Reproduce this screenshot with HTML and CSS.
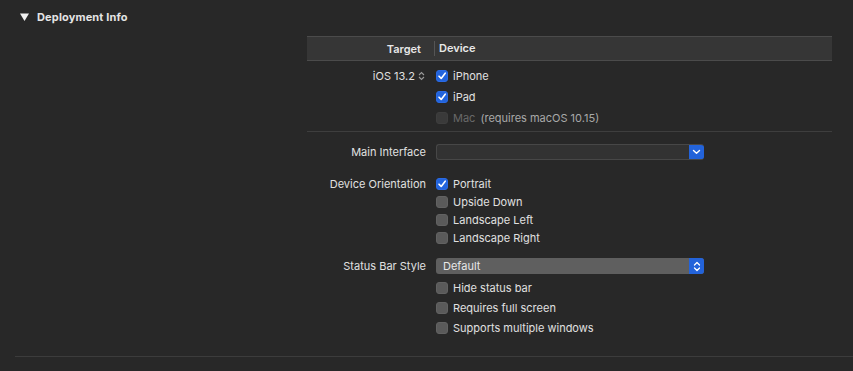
FILE: index.html
```html
<!DOCTYPE html>
<html>
<head>
<meta charset="utf-8">
<link rel="stylesheet" href="styles.css">
</head>
<body>
<div class="page">
  <div class="section-title">
    <svg class="disclosure" width="9" height="8" viewBox="0 0 9 8"><path d="M0 0.5 H9 L4.5 8 Z" fill="#f0f0f0"/></svg>
    <span>Deployment Info</span>
  </div>

  <div class="table">
    <div class="thead">
      <div class="th th-target">Target</div>
      <div class="th th-device">Device</div>
    </div>

    <div class="group group-targets">
      <div class="label">iOS 13.2
        <svg class="stepper" width="7" height="10" viewBox="0 0 7 10"><path d="M1 4 L3.5 1.5 L6 4 M1 6 L3.5 8.5 L6 6" fill="none" stroke="#9a9a9a" stroke-width="1.1"/></svg>
      </div>
      <div class="control"><span class="cb checked"><svg viewBox="0 0 12 12"><path d="M3 6.2 L5.2 8.4 L9.2 3.2" fill="none" stroke="#fff" stroke-width="1.6" stroke-linecap="round" stroke-linejoin="round"/></svg></span><span class="text">iPhone</span></div>
      <div class="label"></div>
      <div class="control"><span class="cb checked"><svg viewBox="0 0 12 12"><path d="M3 6.2 L5.2 8.4 L9.2 3.2" fill="none" stroke="#fff" stroke-width="1.6" stroke-linecap="round" stroke-linejoin="round"/></svg></span><span class="text">iPad</span></div>
      <div class="label"></div>
      <div class="control"><span class="cb disabled"></span><span class="text dim">Mac</span><span class="text note">(requires macOS 10.15)</span></div>
    </div>

    <div class="rule"></div>

    <div class="group group-main">
      <div class="label">Main Interface</div>
      <div class="control">
        <div class="select empty">
          <span class="select-value"></span>
          <span class="select-btn"><svg width="9" height="6" viewBox="0 0 9 6"><path d="M1.5 1.5 L4.5 4.3 L7.5 1.5" fill="none" stroke="#fff" stroke-width="1.4" stroke-linecap="round" stroke-linejoin="round"/></svg></span>
        </div>
      </div>
    </div>

    <div class="group group-orient">
      <div class="label">Device Orientation</div>
      <div class="control"><span class="cb checked"><svg viewBox="0 0 12 12"><path d="M3 6.2 L5.2 8.4 L9.2 3.2" fill="none" stroke="#fff" stroke-width="1.6" stroke-linecap="round" stroke-linejoin="round"/></svg></span><span class="text">Portrait</span></div>
      <div class="label"></div>
      <div class="control"><span class="cb"></span><span class="text">Upside Down</span></div>
      <div class="label"></div>
      <div class="control"><span class="cb"></span><span class="text">Landscape Left</span></div>
      <div class="label"></div>
      <div class="control"><span class="cb"></span><span class="text">Landscape Right</span></div>
    </div>

    <div class="group group-status">
      <div class="label">Status Bar Style</div>
      <div class="control">
        <div class="select filled">
          <span class="select-value">Default</span>
          <span class="select-btn"><svg width="8" height="11" viewBox="0 0 8 11"><path d="M1.5 4 L4 1.5 L6.5 4 M1.5 7 L4 9.5 L6.5 7" fill="none" stroke="#fff" stroke-width="1.3" stroke-linecap="round" stroke-linejoin="round"/></svg></span>
        </div>
      </div>
    </div>

    <div class="group group-statusopts">
      <div class="label"></div>
      <div class="control"><span class="cb"></span><span class="text">Hide status bar</span></div>
      <div class="label"></div>
      <div class="control"><span class="cb"></span><span class="text">Requires full screen</span></div>
      <div class="label"></div>
      <div class="control"><span class="cb"></span><span class="text">Supports multiple windows</span></div>
    </div>
  </div>

  <div class="bottom-rule"></div>
</div>
</body>
</html>
```

FILE: styles.css
```css
html, body {
  margin: 0;
  padding: 0;
  background: #282828;
}

body {
  width: 853px;
  height: 371px;
  overflow: hidden;
  font-family: "Inter", "Liberation Sans", sans-serif;
  font-size: 11px;
  color: #e0e0e0;
}

.page {
  display: flex;
  flex-direction: column;
}

.section-title {
  display: flex;
  align-items: center;
  height: 34px;
  padding-left: 20px;
  box-sizing: border-box;
  font-weight: 700;
  font-size: 11px;
  letter-spacing: 0.15px;
  color: #e4e4e4;
}

.section-title .disclosure {
  margin-right: 8px;
}

.table {
  margin-left: 307px;
  width: 525px;
  margin-top: 2px;
}

.thead {
  display: grid;
  grid-template-columns: 127px 1fr;
  height: 25px;
  box-sizing: border-box;
  background: #363636;
  border-top: 1px solid #4b4b4b;
  border-bottom: 1px solid #4b4b4b;
  align-items: center;
  font-weight: 600;
  color: #e8e8e8;
}

.th-target {
  text-align: right;
  padding-right: 13px;
}

.th-device {
  border-left: 1px solid #555;
  height: 15px;
  line-height: 15px;
  padding-left: 4px;
}

.group {
  display: grid;
  grid-template-columns: 129px 1fr;
  align-items: center;
}

.label {
  text-align: right;
  padding-right: 10px;
  white-space: nowrap;
  display: flex;
  justify-content: flex-end;
  align-items: center;
}

.control {
  display: flex;
  align-items: center;
}

.group-targets {
  grid-auto-rows: 21px;
  padding-top: 4px;
  padding-bottom: 3px;
}

.group-targets .label {
  padding-right: 11px;
}

.stepper {
  margin-left: 3px;
}

.rule {
  height: 1px;
  background: #3e3e3e;
}

.group-main {
  grid-auto-rows: 20px;
  margin-top: 10px;
}

.group-orient {
  grid-auto-rows: 18px;
  margin-top: 13px;
}

.group-status {
  grid-auto-rows: 20px;
  margin-top: 9px;
}

.group-statusopts {
  grid-auto-rows: 20px;
  margin-top: 2px;
}

.cb {
  width: 12px;
  height: 12px;
  border-radius: 3px;
  box-sizing: border-box;
  background: #5a5a5a;
  border: 1px solid #626262;
  margin-right: 5px;
  flex: none;
  display: inline-flex;
}

.cb svg {
  width: 12px;
  height: 12px;
  margin: -1px;
}

.cb.checked {
  background: #2264dc;
  border-color: #2a6ae4;
}

.cb.disabled {
  background: #3a3a3a;
  border-color: #3e3e3e;
}

.text {
  white-space: nowrap;
}

.text.dim {
  color: #686868;
}

.text.note {
  color: #a8a8a8;
  margin-left: 5px;
}

.select {
  width: 268px;
  height: 16px;
  box-sizing: border-box;
  border-radius: 3px;
  display: flex;
  overflow: hidden;
}

.select.empty {
  background: #323232;
  border: 1px solid #474747;
  border-right: none;
}

.select.filled {
  background: #5f5f5f;
}

.select-value {
  flex: 1;
  padding-left: 7px;
  line-height: 16px;
  color: #e8e8e8;
}

.select-btn {
  width: 15px;
  background: #2363da;
  display: flex;
  align-items: center;
  justify-content: center;
}

.select.empty .select-btn {
  margin: -1px 0;
  border-radius: 0 3px 3px 0;
}

.bottom-rule {
  margin-left: 15px;
  margin-top: 18px;
  height: 1px;
  background: #3c3c3c;
}
```
